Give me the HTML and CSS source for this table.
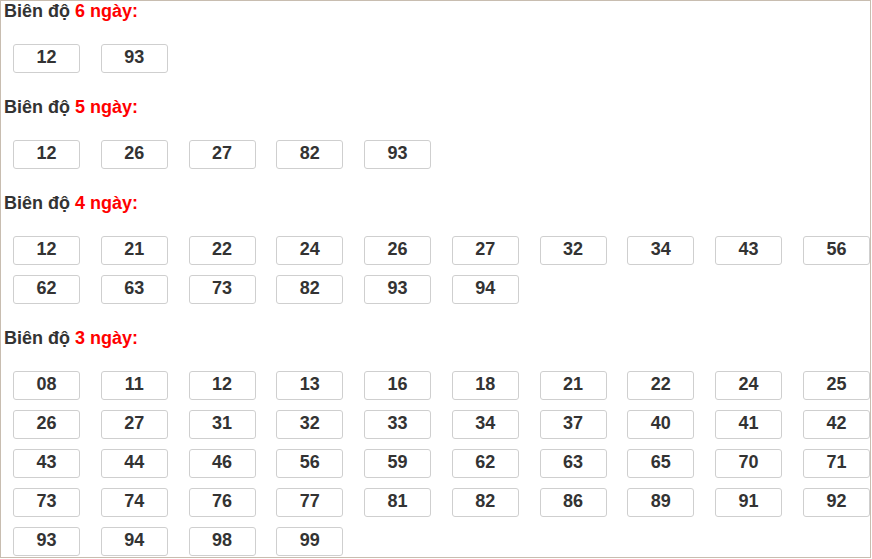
FILE: index.html
```html
<!DOCTYPE html>
<html lang="vi">
<head>
<meta charset="utf-8">
<title>Biên độ</title>
<link rel="stylesheet" href="styles.css">
</head>
<body>
<div class="panel">
  <section class="group">
    <h3 class="title">Biên độ <span class="hl">6 ngày:</span></h3>
    <ul class="nums">
      <li>12</li><li>93</li>
    </ul>
  </section>
  <section class="group">
    <h3 class="title">Biên độ <span class="hl">5 ngày:</span></h3>
    <ul class="nums">
      <li>12</li><li>26</li><li>27</li><li>82</li><li>93</li>
    </ul>
  </section>
  <section class="group">
    <h3 class="title">Biên độ <span class="hl">4 ngày:</span></h3>
    <ul class="nums">
      <li>12</li><li>21</li><li>22</li><li>24</li><li>26</li><li>27</li><li>32</li><li>34</li><li>43</li><li>56</li>
      <li>62</li><li>63</li><li>73</li><li>82</li><li>93</li><li>94</li>
    </ul>
  </section>
  <section class="group">
    <h3 class="title">Biên độ <span class="hl">3 ngày:</span></h3>
    <ul class="nums">
      <li>08</li><li>11</li><li>12</li><li>13</li><li>16</li><li>18</li><li>21</li><li>22</li><li>24</li><li>25</li>
      <li>26</li><li>27</li><li>31</li><li>32</li><li>33</li><li>34</li><li>37</li><li>40</li><li>41</li><li>42</li>
      <li>43</li><li>44</li><li>46</li><li>56</li><li>59</li><li>62</li><li>63</li><li>65</li><li>70</li><li>71</li>
      <li>73</li><li>74</li><li>76</li><li>77</li><li>81</li><li>82</li><li>86</li><li>89</li><li>91</li><li>92</li>
      <li>93</li><li>94</li><li>98</li><li>99</li>
    </ul>
  </section>
</div>
</body>
</html>
```
FILE: styles.css
```css
html, body {
  margin: 0;
  padding: 0;
  background: #fff;
}
body {
  font-family: "Liberation Sans", Arial, sans-serif;
  color: #333;
}
.panel {
  width: 869px;
  border: 1px solid #c8bdb0;
  padding-bottom: 1px;
}
.group {
  display: block;
}
.title {
  margin: 0;
  padding-left: 3px;
  font-size: 18px;
  line-height: 20px;
  font-weight: bold;
  color: #333;
}
.hl {
  color: #f00;
}
.nums {
  list-style: none;
  margin: 23px 0 24px;
  padding: 0 0 0 12px;
  display: grid;
  grid-template-columns: repeat(10, 67px);
  column-gap: 20.78px;
  row-gap: 10px;
}
.group:last-child .nums {
  margin-bottom: 0;
}
.nums li {
  box-sizing: border-box;
  height: 29px;
  border: 1px solid #cfcfcf;
  border-radius: 3px;
  text-align: center;
  font-size: 18px;
  font-weight: bold;
  line-height: 25px;
  padding-bottom: 2px;
  color: #333;
}
```
